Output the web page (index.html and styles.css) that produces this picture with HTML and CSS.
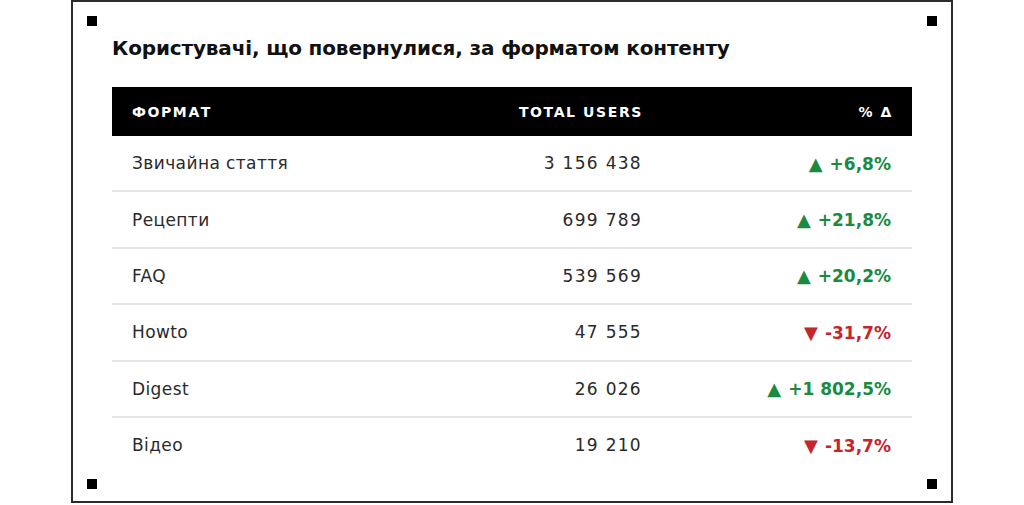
FILE: index.html
```html
<!DOCTYPE html>
<html lang="uk">
<head>
<meta charset="utf-8">
<link rel="stylesheet" href="styles.css">
</head>
<body>
<div class="frame">
  <span class="mark tl"></span><span class="mark tr"></span><span class="mark bl"></span><span class="mark br"></span>
  <h1 class="title">Користувачі, що повернулися, за форматом контенту</h1>
  <table class="data">
    <thead>
      <tr><th class="c-name">Формат</th><th class="c-num">Total users</th><th class="c-delta">% Δ</th></tr>
    </thead>
    <tbody>
      <tr><td class="c-name">Звичайна стаття</td><td class="c-num">3 156 438</td><td class="c-delta up"><span class="arrow">▲</span>+6,8%</td></tr>
      <tr><td class="c-name">Рецепти</td><td class="c-num">699 789</td><td class="c-delta up"><span class="arrow">▲</span>+21,8%</td></tr>
      <tr><td class="c-name">FAQ</td><td class="c-num">539 569</td><td class="c-delta up"><span class="arrow">▲</span>+20,2%</td></tr>
      <tr><td class="c-name">Howto</td><td class="c-num">47 555</td><td class="c-delta down"><span class="arrow">▼</span>-31,7%</td></tr>
      <tr><td class="c-name">Digest</td><td class="c-num">26 026</td><td class="c-delta up"><span class="arrow">▲</span>+1 802,5%</td></tr>
      <tr><td class="c-name">Відео</td><td class="c-num">19 210</td><td class="c-delta down"><span class="arrow">▼</span>-13,7%</td></tr>
    </tbody>
  </table>
</div>
</body>
</html>
```
FILE: styles.css
```css
html, body { margin: 0; padding: 0; background: #fff; }
body { font-family: "DejaVu Sans", "Noto Sans", sans-serif; color: #2a2a2a; }
.frame {
  position: relative;
  box-sizing: border-box;
  width: 882px;
  height: 503px;
  margin-left: 71px;
  border: 2px solid #2b2b2b;
  padding: 31px 39px 0 39px;
}
.mark { position: absolute; width: 10px; height: 10px; background: #000; }
.mark.tl { left: 14px; top: 14px; }
.mark.tr { right: 14px; top: 14px; }
.mark.bl { left: 14px; bottom: 12px; }
.mark.br { right: 14px; bottom: 12px; }
.title {
  margin: 0 0 24px 0;
  font-size: 20px;
  line-height: 30px;
  font-weight: 700;
  color: #111;
  letter-spacing: -0.15px;
}
.data { width: 800px; border-collapse: collapse; }
.data th {
  background: #000;
  color: #fff;
  height: 49px;
  padding: 0 20px;
  font-size: 14px;
  font-weight: 700;
  text-transform: uppercase;
  letter-spacing: 1.6px;
}
.data th.c-num { padding-right: 18px; }
.data th.c-delta { padding-right: 19px; }
.data td {
  height: 54.4px;
  padding: 0 20px;
  font-size: 17px;
  border-bottom: 2px solid #e6e6e6;
}
.data td.c-name { letter-spacing: 0.4px; }
.data td.c-num { letter-spacing: 1.3px; padding-right: 19px; }
.data td.c-delta { padding-right: 21px; }
.data tbody tr:last-child td { border-bottom: none; }
.c-name { text-align: left; }
.c-num { text-align: right; width: 290px; }
.c-delta { text-align: right; width: 210px; font-weight: 700; }
.arrow { display: inline-block; font-size: 18px; margin-right: 7px; }
.up { color: #1b8a3f; }
.down { color: #c4262b; }
```
